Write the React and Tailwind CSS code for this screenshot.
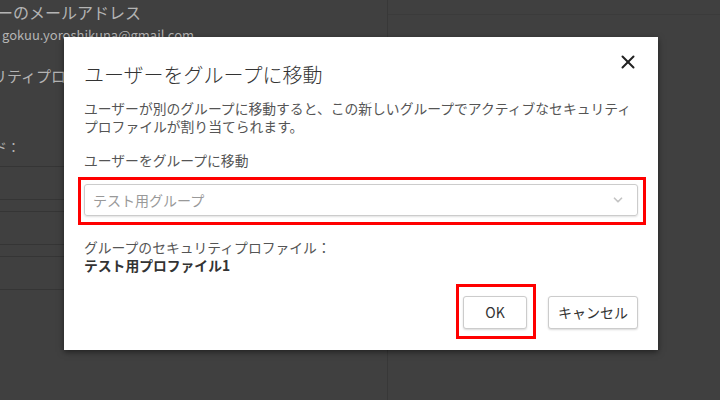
import { X, ChevronDown } from 'lucide-react';

const font = { fontFamily: '"Noto Sans CJK JP", "Noto Sans", sans-serif' };

const Background = () => {
  return (
    <div className="flex h-full w-full bg-[#404040] text-[#b4b4b4]">
      {/* left column behind the dialog */}
      <div className="w-[388px] h-full overflow-hidden border-r border-[#383838]">
        <p className="-ml-[3px] mt-[2px] text-[16px] leading-[20px] whitespace-nowrap">ーのメールアドレス</p>
        <p className="ml-[2px] mt-[4px] text-[13px] leading-[18px] whitespace-nowrap">gokuu.yoroshikuna@gmail.com</p>
        <p className="-ml-[8px] mt-[22px] text-[15px] leading-[20px] whitespace-nowrap">リティプロファイル</p>
        <p className="-ml-[6px] mt-[52px] text-[13px] leading-[18px] whitespace-nowrap">ド：</p>
        <div className="mt-[10px] flex flex-col gap-[11px]">
          <div className="h-[34px] border-y border-[#353535]"></div>
          <div className="h-[34px] border-y border-[#353535]"></div>
          <div className="h-[34px] border-y border-[#353535]"></div>
        </div>
      </div>
      <div className="flex-1 h-full">
        <div className="h-[15px] border-b border-[#3b3b3b]"></div>
      </div>
    </div>
  );
};

const Dialog = () => {
  return (
    <div className="absolute left-[64px] top-[37px] w-[594px] h-[313px] bg-white shadow-[0_2px_6px_rgba(0,0,0,0.5)] px-5 text-[#555]">
      <button className="absolute top-[14px] right-[19px] text-[#222]">
        <X size={22} strokeWidth={2.2} />
      </button>

      <h2 className="mt-[24px] text-[20px] leading-[28px] font-light text-[#333]">ユーザーをグループに移動</h2>

      <p className="mt-[10px] text-[13.8px] leading-[18px] whitespace-nowrap">
        ユーザーが別のグループに移動すると、この新しいグループでアクティブなセキュリティ
        <br />
        プロファイルが割り当てられます。
      </p>

      <p className="mt-[16px] text-[13.8px] leading-[18px]">ユーザーをグループに移動</p>

      {/* highlighted select */}
      <div className="mt-[8px] -ml-[6px] w-[568px] h-[48px] border-[3px] border-[#ff0000] pl-[3px] pr-[5px] pt-[4px]">
        <div className="flex items-center justify-between h-[32px] rounded-[3px] border border-[#cccccc] shadow-[0_1px_2px_rgba(0,0,0,0.12)] pl-[8px] pr-[12px]">
          <span className="text-[14px] text-[#999]">テスト用グループ</span>
          <ChevronDown size={14} strokeWidth={3} className="text-[#c4c4c4]" />
        </div>
      </div>

      <p className="mt-[13px] text-[13.8px] leading-[18px]">グループのセキュリティプロファイル：</p>
      <p className="text-[13.8px] leading-[18px] font-bold text-[#333]">テスト用プロファイル1</p>

      <div className="mt-[10px] flex justify-end items-start gap-[12px]">
        <div className="w-[80px] h-[55px] border-[3px] border-[#ff0000] pl-[4px] pt-[9px]">
          <button className="w-[64px] h-[33px] rounded-[3px] border border-[#cccccc] bg-white shadow-[0_1px_2px_rgba(0,0,0,0.15)] text-[14px] text-[#333]">
            OK
          </button>
        </div>
        <button className="mt-[12px] w-[90px] h-[33px] rounded-[3px] border border-[#cccccc] bg-white shadow-[0_1px_2px_rgba(0,0,0,0.15)] text-[14px] text-[#333]">
          キャンセル
        </button>
      </div>
    </div>
  );
};

export default function App() {
  return (
    <div className="relative w-[720px] h-[400px] overflow-hidden" style={font}>
      <Background />
      <Dialog />
    </div>
  );
}
